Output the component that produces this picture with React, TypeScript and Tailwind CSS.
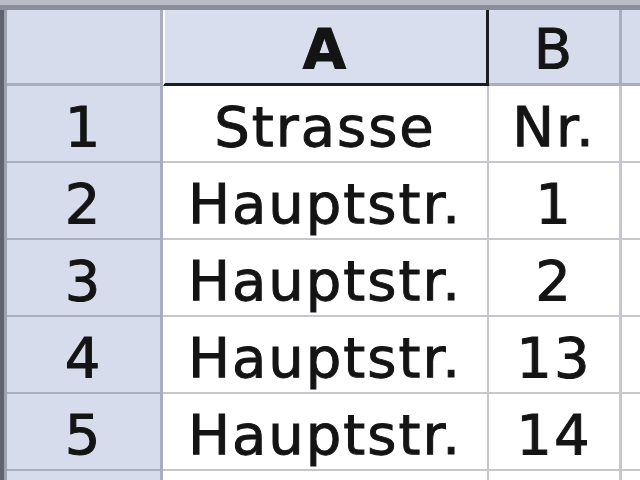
import React from 'react';

const rows: [string, string, string][] = [
  ['1', 'Strasse', 'Nr.'],
  ['2', 'Hauptstr.', '1'],
  ['3', 'Hauptstr.', '2'],
  ['4', 'Hauptstr.', '13'],
  ['5', 'Hauptstr.', '14'],
  ['', '', ''],
];

const font = { fontFamily: '"DejaVu Sans", Verdana, sans-serif' };

export default function App() {
  return (
    <div className="w-[640px] h-[480px] overflow-hidden bg-white text-[#141414] [-webkit-text-stroke:1px_#141414]" style={font}>
      {/* top toolbar edge */}
      <div className="h-[10px] bg-[#b9bbc6] border-b-[5px] border-[#8a8d9a]" />

      <div className="flex">
        {/* left window edge */}
        <div className="w-[7px] shrink-0 bg-[#5f6370] border-r-[3px] border-[#9ea2b0]" />

        <div className="flex flex-col">
          {/* column header row */}
          <div className="flex h-[76px] text-[56px] leading-none tracking-[2px]">
            <div className="w-[156px] shrink-0 bg-[#d6dceb] border-r-[3px] border-b-[3px] border-[#a9adbd]" />
            <div className="w-[326px] shrink-0 flex items-center justify-center pt-[4px] bg-[#d9deee] border-l-2 border-l-white border-r-[3px] border-b-[3px] border-[#1c1c24] font-bold">
              A
            </div>
            <div className="w-[133px] shrink-0 flex items-center justify-center pt-[4px] bg-[#d6dceb] border-r-[3px] border-b-[3px] border-[#a9adbd]">
              B
            </div>
            <div className="w-[40px] shrink-0 bg-[#d6dceb] border-b-[3px] border-[#a9adbd]" />
          </div>

          {rows.map(([n, a, b], i) => (
            <div key={i} className="flex h-[77px] text-[56px] leading-none tracking-[2px]">
              <div className="w-[156px] shrink-0 flex items-center justify-center pt-[6px] bg-[#d6dceb] border-r-[3px] border-b-2 border-[#a9adbd]">
                {n}
              </div>
              <div className="w-[326px] shrink-0 flex items-center justify-center pt-[6px] border-r-2 border-b-2 border-[#c6c7cc]">
                {a}
              </div>
              <div className="w-[133px] shrink-0 flex items-center justify-center pt-[6px] border-r-[3px] border-b-2 border-[#c6c7cc]">
                {b}
              </div>
              <div className="w-[40px] shrink-0 border-b-2 border-[#c6c7cc]" />
            </div>
          ))}
        </div>
      </div>
    </div>
  );
}
